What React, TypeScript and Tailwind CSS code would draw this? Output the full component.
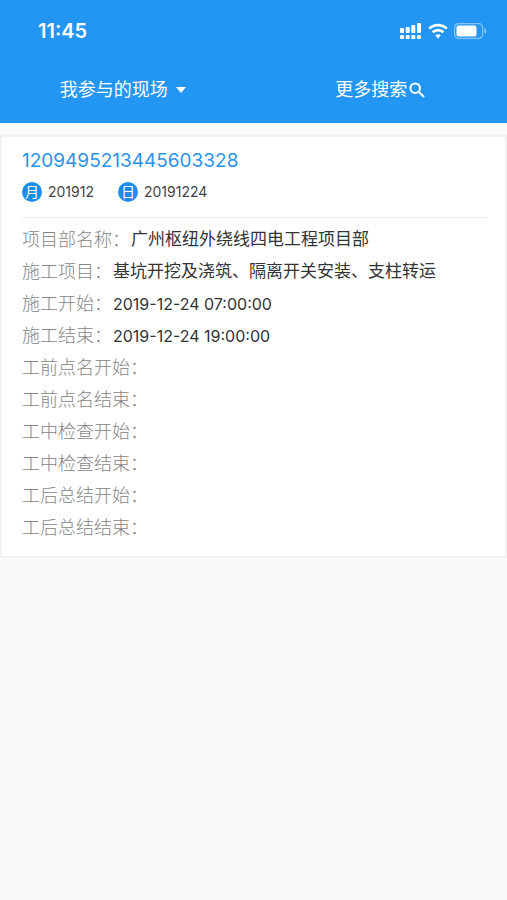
type Field = { label: string; value: string; isTime?: boolean };

const fields: Field[] = [
  { label: "项目部名称", value: "广州枢纽外绕线四电工程项目部" },
  { label: "施工项目", value: "基坑开挖及浇筑、隔离开关安装、支柱转运" },
  { label: "施工开始", value: "2019-12-24 07:00:00", isTime: true },
  { label: "施工结束", value: "2019-12-24 19:00:00", isTime: true },
  { label: "工前点名开始", value: "" },
  { label: "工前点名结束", value: "" },
  { label: "工中检查开始", value: "" },
  { label: "工中检查结束", value: "" },
  { label: "工后总结开始", value: "" },
  { label: "工后总结结束", value: "" },
];

function SignalIcon() {
  return (
    <svg width="22" height="18" viewBox="0 0 22 18" fill="currentColor" aria-hidden="true">
      <rect x="0" y="6" width="4" height="5" rx="1" />
      <rect x="5.7" y="5" width="4" height="6" rx="1" />
      <rect x="11.3" y="3" width="4" height="8" rx="1" />
      <rect x="17" y="1" width="4" height="10" rx="1" />
      <rect x="0" y="13" width="4" height="4" rx="1" />
      <rect x="5.7" y="13" width="4" height="4" rx="1" />
      <rect x="11.3" y="13" width="4" height="4" rx="1" />
      <rect x="17" y="13" width="4" height="4" rx="1" />
    </svg>
  );
}

function WifiIcon() {
  return (
    <svg width="20" height="16" viewBox="0 0 20 16" fill="none" stroke="currentColor" strokeWidth="2.6" aria-hidden="true">
      <path d="M1.2 5.6a12.8 12.8 0 0 1 17.6 0" />
      <path d="M4.6 9.3a7.8 7.8 0 0 1 10.8 0" />
      <path d="M10 15.4 7.2 12.5a4.1 4.1 0 0 1 5.6 0Z" fill="currentColor" stroke="none" />
    </svg>
  );
}

function BatteryIcon() {
  return (
    <svg width="33" height="16" viewBox="0 0 33 16" fill="none" aria-hidden="true">
      <rect x="0.6" y="0.6" width="28" height="14.8" rx="4" stroke="white" strokeOpacity="0.45" strokeWidth="1.2" />
      <rect x="2.5" y="2.6" width="20" height="10.8" rx="2" fill="white" />
      <path d="M30.4 5.4c2.4.8 2.4 4.4 0 5.2Z" fill="white" fillOpacity="0.5" />
    </svg>
  );
}

function DateBadge({ mark, text }: { mark: string; text: string }) {
  return (
    <div className="flex items-center gap-1.5">
      <span className="flex h-5 w-5 items-center justify-center rounded-full bg-[#1e8ceb] text-sm leading-5 text-white">
        {mark}
      </span>
      <span className="text-sm leading-5 text-[#444]">{text}</span>
    </div>
  );
}

export default function App() {
  return (
    <div className="min-h-screen bg-[#fafafa] font-['Inter','Noto_Sans_CJK_SC',sans-serif]">
      <header className="bg-[#2395f3] text-white">
        <div className="flex h-[62px] items-center justify-between pr-5 pl-[38px]">
          <time className="text-xl font-semibold">11:45</time>
          <div className="flex items-center gap-1.5">
            <SignalIcon />
            <WifiIcon />
            <BatteryIcon />
          </div>
        </div>
        <nav className="grid h-[61px] grid-cols-2 pb-1.5 text-lg">
          <button type="button" className="flex items-center justify-center gap-2 pr-2">
            我参与的现场
            <svg width="10" height="6" viewBox="0 0 10 6" fill="currentColor" aria-hidden="true">
              <path d="M0 0h10L5 6Z" />
            </svg>
          </button>
          <button type="button" className="flex items-center justify-center gap-0.5">
            更多搜索
            <svg width="16" height="16" viewBox="0 0 16 16" fill="none" stroke="currentColor" strokeWidth="2" aria-hidden="true">
              <circle cx="6.2" cy="6.2" r="4.8" />
              <path d="m9.8 9.8 5.2 5.2" />
            </svg>
          </button>
        </nav>
      </header>

      <main className="pt-3">
        <section className="border-2 border-[#f2f2f2] bg-white pt-3 pr-[18px] pb-3 pl-5">
          <h1>
            <a href="#" className="block text-[19px] leading-6 text-[#2a93ea]">
              1209495213445603328
            </a>
          </h1>
          <div className="flex gap-6 border-b border-[#ececec] pt-[9px] pb-[15px]">
            <DateBadge mark="月" text="201912" />
            <DateBadge mark="日" text="20191224" />
          </div>
          <dl className="pt-1.5">
            {fields.map((f) => (
              <div key={f.label} className="flex h-8 items-center gap-px">
                <dt className="text-lg font-light text-[#858585]">{f.label}：</dt>
                <dd className={f.isTime ? "text-base text-[#333]" : "text-[17px] text-[#333]"}>{f.value}</dd>
              </div>
            ))}
          </dl>
        </section>
      </main>
    </div>
  );
}
